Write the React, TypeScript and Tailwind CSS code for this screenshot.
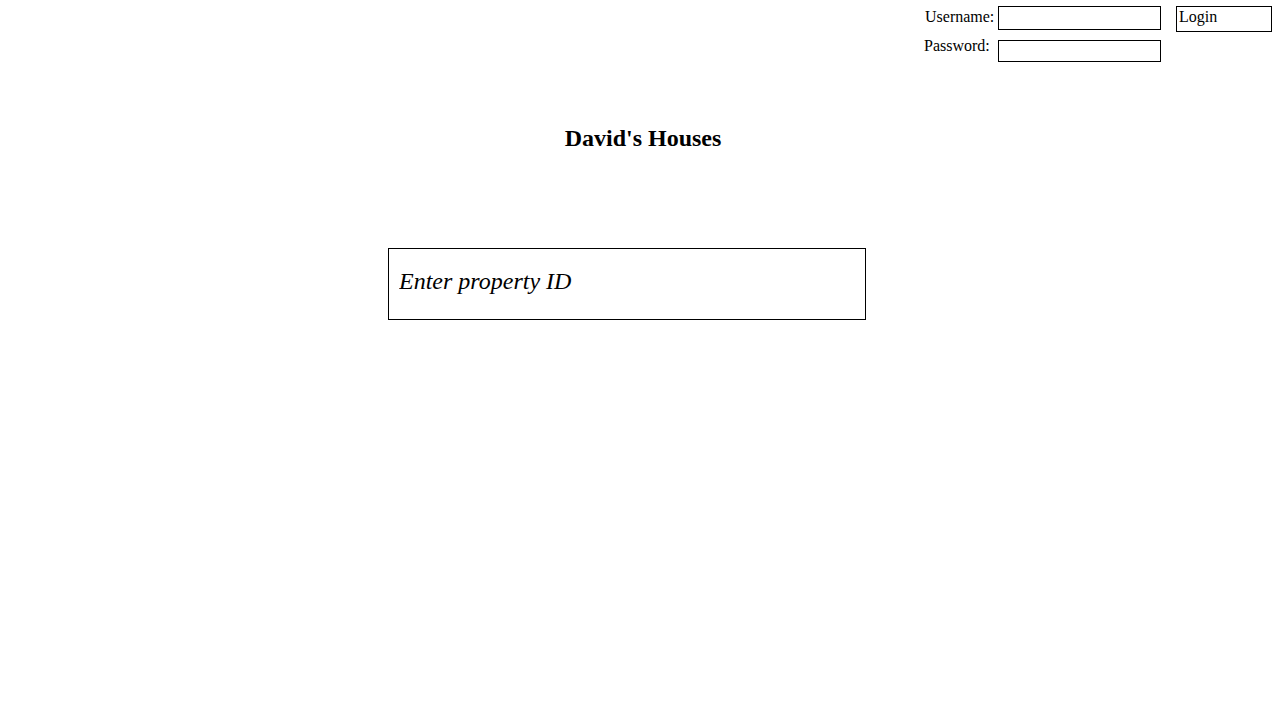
const App = () => {
    return (
        <div className="min-h-[720px] bg-white text-black font-['Liberation_Serif',serif]">
            <div className="flex justify-end pt-[6px] pr-[8px]">
                <div className="flex items-start gap-[15px]">
                    <div className="flex flex-col gap-[10px]">
                        <div className="flex items-start">
                            <span className="w-[74px] pl-[1px] mt-[2px] text-[16px] leading-[18px]">Username:</span>
                            <input className="w-[163px] h-[24px] border border-black outline-none px-1 text-[15px]" />
                        </div>
                        <div className="flex items-start">
                            <span className="w-[74px] -mt-[3px] text-[16px] leading-[18px]">Password:</span>
                            <input type="password" className="w-[163px] h-[22px] border border-black outline-none px-1 text-[15px]" />
                        </div>
                    </div>
                    <button className="w-[96px] h-[26px] border border-black text-left pl-[2px] text-[16px] leading-[18px] pb-[5px]">
                        Login
                    </button>
                </div>
            </div>
            <h1 className="mt-[62px] text-center pl-[6px] text-[24px] leading-[28px] font-bold">David's Houses</h1>
            <div className="mt-[96px] flex pl-[388px]">
                <input
                    placeholder="Enter property ID"
                    className="w-[478px] h-[72px] border border-black outline-none px-[10px] pb-[6px] italic text-[24px] placeholder:text-black"
                />
            </div>
        </div>
    );
};

export default App;
